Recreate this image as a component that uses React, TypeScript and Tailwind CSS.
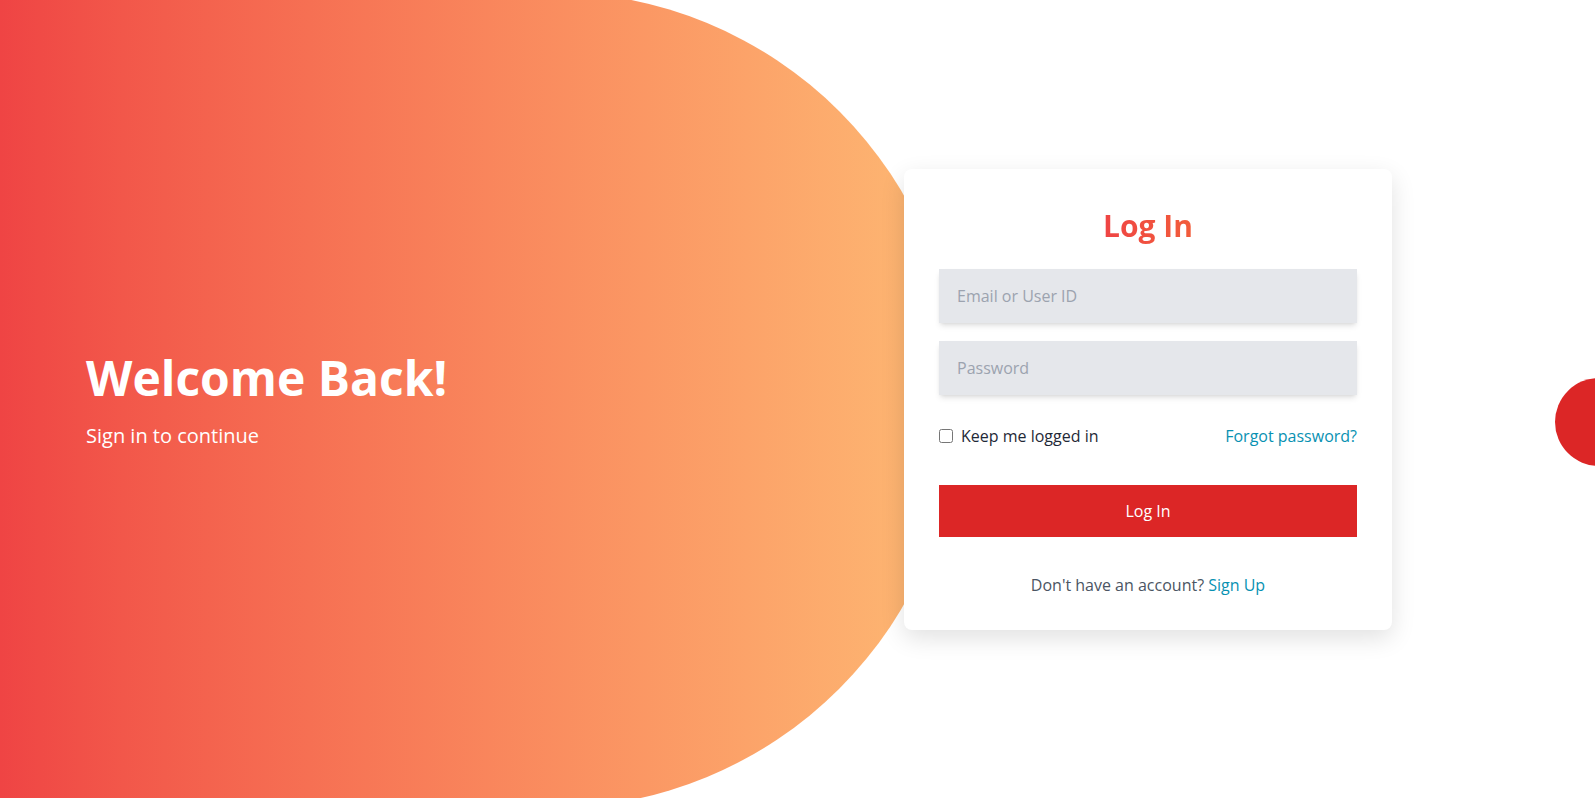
import { useState } from "react";

export default function App() {
  const [remember, setRemember] = useState(false);

  return (
    <div className="relative flex h-screen w-full items-center justify-between overflow-hidden bg-white font-['Open_Sans',sans-serif]">
      {/* Decorative shapes */}
      <div
        aria-hidden
        className="absolute left-0 top-[-8px] h-[816px] w-[959px] rounded-r-full bg-linear-to-r from-[#ef4444] to-[#fdba74]"
      />
      <div
        aria-hidden
        className="absolute right-[-48px] top-[378px] h-[88px] w-[88px] rounded-full bg-[#dc2626]"
      />

      {/* Left welcome text */}
      <div className="relative mt-[6px] pl-[86px] text-white">
        <h1 className="text-5xl font-bold">Welcome Back!</h1>
        <p className="mt-5 text-xl">Sign in to continue</p>
      </div>

      {/* Login card */}
      <div className="relative mr-[203px] w-[488px] rounded-lg bg-white px-[35px] pt-[39px] pb-[33px] shadow-[0_8px_24px_rgba(0,0,0,0.12)]">
        <h2 className="text-center">
          <span className="inline-block bg-linear-to-r from-[#ef4444] to-[#f25c3a] bg-clip-text text-3xl font-bold text-transparent">
            Log In
          </span>
        </h2>

        <form className="mt-[25px]" onSubmit={(e) => e.preventDefault()}>
          <input
            type="text"
            placeholder="Email or User ID"
            className="block h-[54px] w-full bg-[#e5e7eb] px-[18px] text-base text-[#1f2937] shadow-md outline-none placeholder:text-[#9ca3af]"
          />
          <input
            type="password"
            placeholder="Password"
            className="mt-[18px] block h-[54px] w-full bg-[#e5e7eb] px-[18px] text-base text-[#1f2937] shadow-md outline-none placeholder:text-[#9ca3af]"
          />

          <div className="mt-[29px] flex items-center justify-between text-base leading-6">
            <label className="flex items-center gap-2 text-[#1f2937]">
              <input
                type="checkbox"
                checked={remember}
                onChange={(e) => setRemember(e.target.checked)}
                className="h-3.5 w-3.5"
              />
              Keep me logged in
            </label>
            <a href="#" className="text-[#0891b2] hover:underline">
              Forgot password?
            </a>
          </div>

          <button
            type="submit"
            className="mt-[37px] h-[52px] w-full bg-[#dc2626] text-base text-white transition-colors hover:bg-[#b91c1c]"
          >
            Log In
          </button>
        </form>

        <p className="mt-9 text-center text-base leading-6 text-[#4b5563]">
          Don't have an account?{" "}
          <a href="#" className="text-[#0891b2] hover:underline">
            Sign Up
          </a>
        </p>
      </div>
    </div>
  );
}
